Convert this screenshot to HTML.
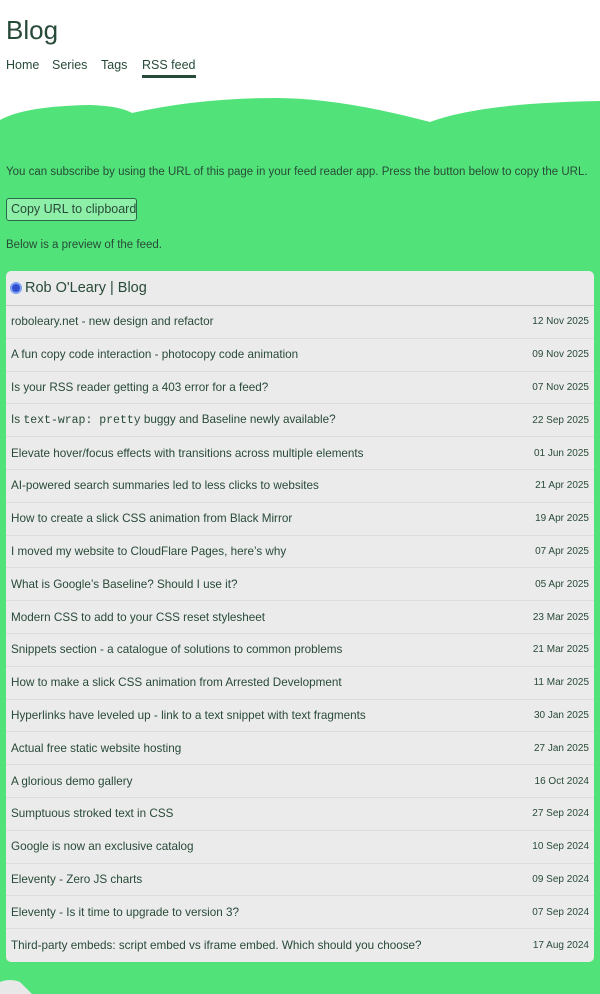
<!DOCTYPE html>
<html><head><meta charset="utf-8"><style>
*{margin:0;padding:0;box-sizing:border-box}
body{width:600px;height:994px;overflow:hidden;background:#fff;font-family:"Liberation Sans",sans-serif;color:#284a38;position:relative}
h1{position:absolute;left:6px;top:15px;font-size:26px;font-weight:400}
nav{position:absolute;left:6px;top:58px;font-size:12.5px}
nav a{position:absolute;top:0;color:#284a38;text-decoration:none;white-space:nowrap}
nav a.cur{border-bottom:3px solid #284a38;padding-bottom:3px}
.green{position:absolute;left:0;top:128px;width:600px;height:866px;background:#51e379}
svg.wave{position:absolute;left:0;top:80px}
p{position:absolute;left:6px;font-size:11.5px;white-space:nowrap}
.btn{position:absolute;left:6px;top:198px;width:131px;height:23px;border:1px solid #2a6a48;border-radius:3px;background:#8ef0a8;font-size:12.5px;padding:3px 0 0 4px;white-space:nowrap}
.card{position:absolute;left:6px;top:271px;width:588px;height:691px;background:#ebebeb;border-radius:5px;overflow:hidden}
.hd{height:35px;border-bottom:1px solid #c8c8c8;font-size:14.5px;padding-left:4px;display:flex;align-items:center;gap:3px}
.ic{width:12px;height:12px;border-radius:50%;background:#3050d0;border:2px solid #7ea0f0;display:inline-block}
.row{height:32.8px;border-bottom:1px solid #dcdcdc;display:flex;justify-content:space-between;align-items:center;padding:0 5px;font-size:11.7px;white-space:nowrap}
.row:last-child{border-bottom:none}
.row span{font-size:10px}
code{font-family:"Liberation Mono",monospace;font-size:11.5px}
</style></head><body>
<h1>Blog</h1>
<nav><a style="left:0">Home</a><a style="left:46px">Series</a><a style="left:95px">Tags</a><a class="cur" style="left:136px">RSS feed</a></nav>
<svg class="wave" width="600" height="50" viewBox="0 0 600 50"><path d="M0 40 Q25 26 90 25 Q120 26 132 33 Q200 18 275 18 Q340 18 430 42 Q480 23 600 21 L600 50 L0 50Z" fill="#51e379"/></svg>
<div class="green"></div>
<p style="top:166px">You can subscribe by using the URL of this page in your feed reader app. Press the button below to copy the URL.</p>
<div class="btn">Copy URL to clipboard</div>
<p style="top:239px">Below is a preview of the feed.</p>
<div class="card">
<div class="hd"><i class="ic"></i>Rob O'Leary | Blog</div>
<div class="row">roboleary.net - new design and refactor<span>12 Nov 2025</span></div>
<div class="row">A fun copy code interaction - photocopy code animation<span>09 Nov 2025</span></div>
<div class="row">Is your RSS reader getting a 403 error for a feed?<span>07 Nov 2025</span></div>
<div class="row"><div>Is <code>text-wrap: pretty</code> buggy and Baseline newly available?</div><span>22 Sep 2025</span></div>
<div class="row">Elevate hover/focus effects with transitions across multiple elements<span>01 Jun 2025</span></div>
<div class="row">AI-powered search summaries led to less clicks to websites<span>21 Apr 2025</span></div>
<div class="row">How to create a slick CSS animation from Black Mirror<span>19 Apr 2025</span></div>
<div class="row">I moved my website to CloudFlare Pages, here’s why<span>07 Apr 2025</span></div>
<div class="row">What is Google’s Baseline? Should I use it?<span>05 Apr 2025</span></div>
<div class="row">Modern CSS to add to your CSS reset stylesheet<span>23 Mar 2025</span></div>
<div class="row">Snippets section - a catalogue of solutions to common problems<span>21 Mar 2025</span></div>
<div class="row">How to make a slick CSS animation from Arrested Development<span>11 Mar 2025</span></div>
<div class="row">Hyperlinks have leveled up - link to a text snippet with text fragments<span>30 Jan 2025</span></div>
<div class="row">Actual free static website hosting<span>27 Jan 2025</span></div>
<div class="row">A glorious demo gallery<span>16 Oct 2024</span></div>
<div class="row">Sumptuous stroked text in CSS<span>27 Sep 2024</span></div>
<div class="row">Google is now an exclusive catalog<span>10 Sep 2024</span></div>
<div class="row">Eleventy - Zero JS charts<span>09 Sep 2024</span></div>
<div class="row">Eleventy - Is it time to upgrade to version 3?<span>07 Sep 2024</span></div>
<div class="row">Third-party embeds: script embed vs iframe embed. Which should you choose?<span>17 Aug 2024</span></div>
</div>
<svg style="position:absolute;left:0;top:978px" width="40" height="16"><path d="M0 4 Q10 0 20 4 L32 16 L0 16Z" fill="#e8e8e8"/></svg>
</body></html>
